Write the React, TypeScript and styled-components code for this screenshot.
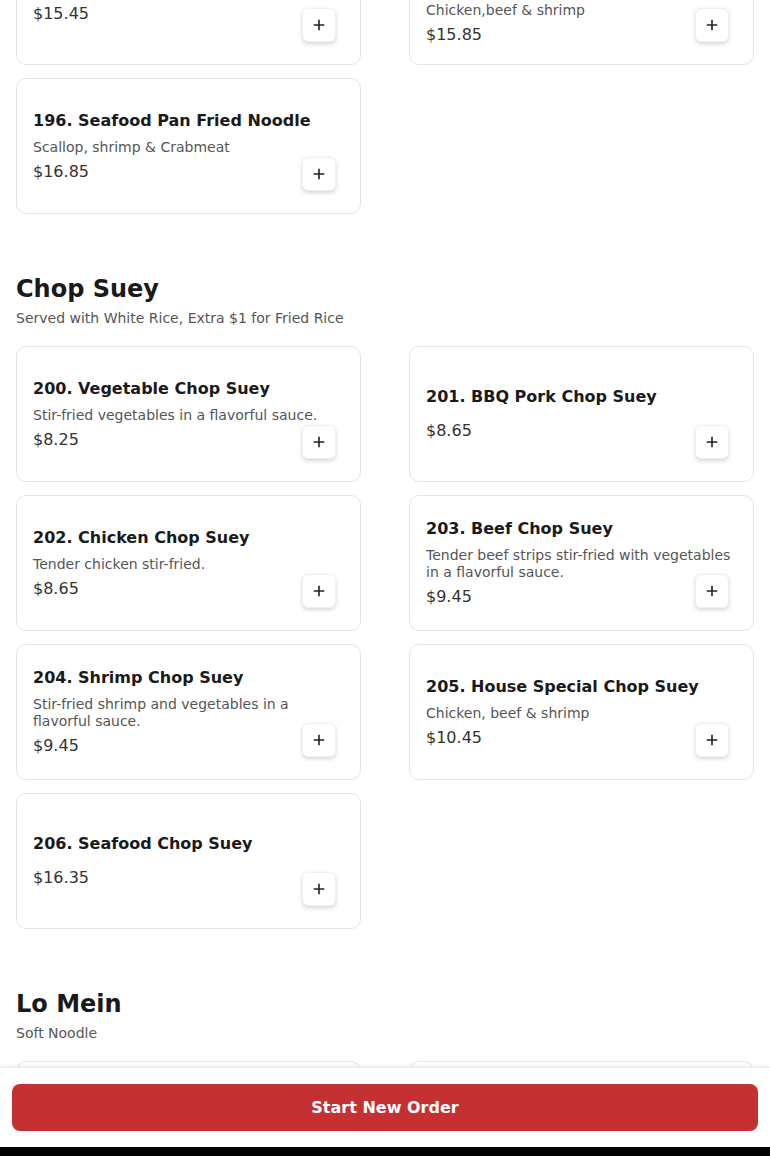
import React from "react";
import styled, { createGlobalStyle } from "styled-components";

const GlobalStyle = createGlobalStyle`
  html, body { margin: 0; padding: 0; background: #ffffff; }
  body {
    font-family: "DejaVu Sans", "Noto Sans", sans-serif;
    color: #1a1a1a;
    -webkit-font-smoothing: antialiased;
  }
  * { box-sizing: border-box; }
`;

type Item = { name: string; desc?: string; price: string };
type Section = { title?: string; subtitle?: string; items: Item[] };

const sections: Section[] = [
  {
    items: [
      { name: "194. Shrimp Pan Fried Noodle", price: "$15.45" },
      {
        name: "195. House Special Pan Fried Noodle",
        desc: "Chicken,beef & shrimp",
        price: "$15.85",
      },
      {
        name: "196. Seafood Pan Fried Noodle",
        desc: "Scallop, shrimp & Crabmeat",
        price: "$16.85",
      },
    ],
  },
  {
    title: "Chop Suey",
    subtitle: "Served with White Rice, Extra $1 for Fried Rice",
    items: [
      {
        name: "200. Vegetable Chop Suey",
        desc: "Stir-fried vegetables in a flavorful sauce.",
        price: "$8.25",
      },
      { name: "201. BBQ Pork Chop Suey", price: "$8.65" },
      {
        name: "202. Chicken Chop Suey",
        desc: "Tender chicken stir-fried.",
        price: "$8.65",
      },
      {
        name: "203. Beef Chop Suey",
        desc: "Tender beef strips stir-fried with vegetables in a flavorful sauce.",
        price: "$9.45",
      },
      {
        name: "204. Shrimp Chop Suey",
        desc: "Stir-fried shrimp and vegetables in a flavorful sauce.",
        price: "$9.45",
      },
      {
        name: "205. House Special Chop Suey",
        desc: "Chicken, beef & shrimp",
        price: "$10.45",
      },
      { name: "206. Seafood Chop Suey", price: "$16.35" },
    ],
  },
  {
    title: "Lo Mein",
    subtitle: "Soft Noodle",
    items: [
      { name: "210. Vegetable Lo Mein", desc: "Mixed vegetables", price: "$8.25" },
      { name: "211. BBQ Pork Lo Mein", price: "$8.65" },
    ],
  },
];

const Page = styled.main`
  margin-top: -71px;
  padding: 0 16px 120px;
  display: flex;
  flex-direction: column;
  gap: 61px;
`;

const SectionBlock = styled.section`
  display: flex;
  flex-direction: column;
`;

const SectionTitle = styled.h2`
  margin: 0;
  font-size: 24px;
  line-height: 29px;
  font-weight: 700;
  color: #1a1a1a;
`;

const SectionSubtitle = styled.p`
  margin: 6px 0 19px;
  font-size: 14px;
  line-height: 17px;
  color: #555555;
`;

const Grid = styled.div`
  display: grid;
  grid-template-columns: 1fr 1fr;
  column-gap: 48px;
  row-gap: 13px;
`;

const Card = styled.article`
  position: relative;
  min-height: 136px;
  border: 1px solid #e4e4e4;
  border-radius: 10px;
  background: #ffffff;
  padding: 16px;
  display: flex;
  flex-direction: column;
  justify-content: center;
`;

const ItemName = styled.h3<{ $hasDesc: boolean }>`
  margin: 0 0 ${(p) => (p.$hasDesc ? "6px" : "10px")};
  font-size: 16px;
  line-height: 24px;
  font-weight: 700;
  color: #1a1a1a;
`;

const ItemDesc = styled.p`
  margin: 0 0 4px;
  font-size: 14px;
  line-height: 17px;
  color: #555555;
`;

const ItemPrice = styled.div`
  font-size: 16px;
  line-height: 24px;
  color: #333333;
`;

const AddButton = styled.button`
  position: absolute;
  right: 24px;
  bottom: 22px;
  width: 34px;
  height: 34px;
  border: 1px solid #f0f0f0;
  border-radius: 6px;
  background: #ffffff;
  box-shadow: 0 2px 4px rgba(0, 0, 0, 0.16);
  display: flex;
  align-items: center;
  justify-content: center;
  padding: 0;
  cursor: pointer;
  color: #222222;
`;

const Footer = styled.footer`
  position: fixed;
  left: 0;
  right: 0;
  bottom: 0;
  background: #ffffff;
  display: flex;
  flex-direction: column;
  box-shadow: 0 -1px 4px rgba(0, 0, 0, 0.08);
  border-top: 1px solid #ececec;
`;

const FooterInner = styled.div`
  padding: 16px 12px;
`;

const StartButton = styled.button`
  width: 100%;
  height: 47px;
  border: none;
  border-radius: 8px;
  background: #c53032;
  color: #ffffff;
  font-family: "DejaVu Sans", sans-serif;
  font-size: 16px;
  font-weight: 700;
  cursor: pointer;
`;

const BottomStrip = styled.div`
  height: 9px;
  background: #000000;
`;

const PlusIcon = () => (
  <svg width="12" height="12" viewBox="0 0 12 12" aria-hidden="true">
    <path d="M6 1.5v9M1.5 6h9" stroke="currentColor" strokeWidth="1.6" strokeLinecap="square" />
  </svg>
);

export default function App() {
  return (
    <>
      <GlobalStyle />
      <Page>
        {sections.map((s, i) => (
          <SectionBlock key={i}>
            {s.title && <SectionTitle>{s.title}</SectionTitle>}
            {s.subtitle && <SectionSubtitle>{s.subtitle}</SectionSubtitle>}
            <Grid>
              {s.items.map((it) => (
                <Card key={it.name}>
                  <ItemName $hasDesc={!!it.desc}>{it.name}</ItemName>
                  {it.desc && <ItemDesc>{it.desc}</ItemDesc>}
                  <ItemPrice>{it.price}</ItemPrice>
                  <AddButton aria-label={`Add ${it.name}`}>
                    <PlusIcon />
                  </AddButton>
                </Card>
              ))}
            </Grid>
          </SectionBlock>
        ))}
      </Page>
      <Footer>
        <FooterInner>
          <StartButton>Start New Order</StartButton>
        </FooterInner>
        <BottomStrip />
      </Footer>
    </>
  );
}
